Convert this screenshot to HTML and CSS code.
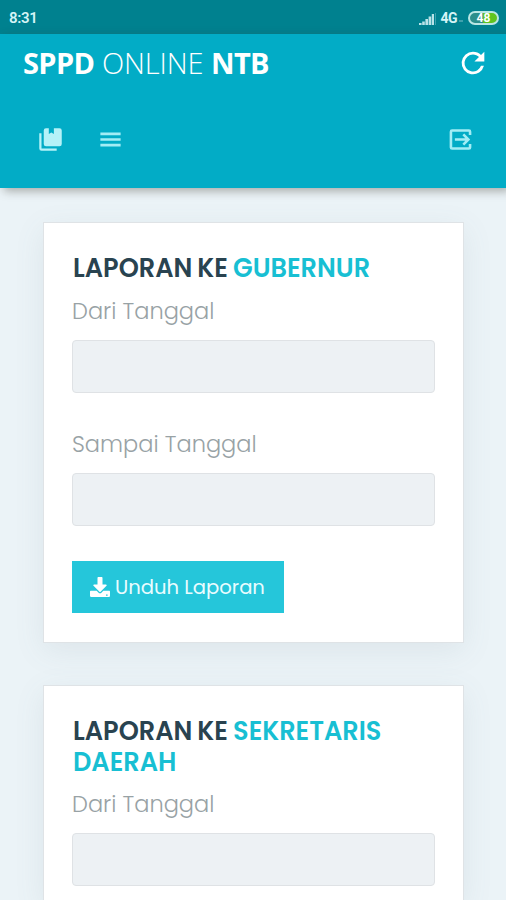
FILE: index.html
```html
<!DOCTYPE html>
<html lang="id">
<head>
  <meta charset="UTF-8" />
  <meta name="viewport" content="width=device-width, initial-scale=1.0"/>
  <title>SPPD Online NTB</title>
  <link rel="stylesheet" href="styles.css">
</head>
<body>
  <div class="status-bar">
    <span class="clock">8:31</span>
    <div class="status-right">
      <svg class="signal" width="18" height="13" viewBox="0 0 18 13">
        <path d="M0 13v-2h2.600v2zM3.200 13V9.500h2.600V13zM6.400 13V7H9v6zM9.600 13V4.500h2.600V13zM12.800 13V2h2.200v11z" fill="#b9e3e8"/>
        <path d="M16.500 1v12" stroke="#3fa1ad" stroke-width="1"/>
      </svg>
      <span class="network">4G</span>
      <span class="dots"></span>
      <div class="battery">48</div>
    </div>
  </div>

  <header class="header">
    <div class="header-top">
      <h1 class="brand"><b>SPPD</b> ONLINE <b>NTB</b></h1>
      <svg class="refresh" width="34" height="34" viewBox="0 0 24 24">
        <path fill="#fff" d="M17.650 6.350A7.950 7.950 0 0 0 12 4a8 8 0 1 0 7.730 10h-2.080A6 6 0 1 1 12 6c1.660 0 3.140.69 4.220 1.780L13 11h7V4z"/>
      </svg>
    </div>
    <nav class="nav">
      <svg width="27" height="27" viewBox="0 0 24 24">
        <path fill="#b5f2f8" d="M4 6.500H2V20a2 2 0 0 0 2 2h13.500v-2H4z"/>
        <path fill="#b5f2f8" d="M20 2h-5v5l-2.300-1.300L10.500 7V2H8a2 2 0 0 0-2 2v12a2 2 0 0 0 2 2h12a2 2 0 0 0 2-2V4a2 2 0 0 0-2-2z"/>
      </svg>
      <svg class="menu" width="27" height="27" viewBox="0 0 24 24">
        <path fill="#a3edf5" d="M3 18.200h18v-2.400H3zm0-5h18v-2.400H3zm0-7.400v2.400h18V5.800z"/>
      </svg>
      <svg class="exit" width="27" height="27" viewBox="0 0 24 24" fill="none" stroke="#a3edf5" stroke-width="2.300">
        <path d="M20.500 8V5a1 1 0 0 0-1-1H4.500a1 1 0 0 0-1 1v14a1 1 0 0 0 1 1h15a1 1 0 0 0 1-1v-3"/>
        <path d="M7 12h11.500M14.500 7.500 19 12l-4.500 4.500"/>
      </svg>
    </nav>
  </header>

  <main class="content">
    <section class="card">
      <h2 class="title"><span class="dark">LAPORAN KE</span> <span class="accent">GUBERNUR</span></h2>
      <label class="label" for="dari1">Dari Tanggal</label>
      <input class="field" id="dari1" type="text" readonly>
      <label class="label label-to" for="sampai1">Sampai Tanggal</label>
      <input class="field" id="sampai1" type="text" readonly>
      <button class="btn">
        <svg width="20" height="20" viewBox="0 0 512 512">
          <path fill="#fff" d="M216 0h80c13 0 24 11 24 24v168h88c18 0 27 21 14 34L270 378c-7 7-20 7-28 0L90 226c-13-13-4-34 14-34h88V24c0-13 11-24 24-24zm296 376v112c0 13-11 24-24 24H24c-13 0-24-11-24-24V376c0-13 11-24 24-24h147l49 49c20 20 52 20 72 0l49-49h147c13 0 24 11 24 24zm-60 88a20 20 0 1 0-40 0 20 20 0 0 0 40 0z"/>
        </svg>
        <span>Unduh Laporan</span>
      </button>
    </section>

    <section class="card card-last">
      <h2 class="title"><span class="dark">LAPORAN KE</span> <span class="accent">SEKRETARIS<br>DAERAH</span></h2>
      <label class="label" for="dari2">Dari Tanggal</label>
      <input class="field" id="dari2" type="text" readonly>
    </section>
  </main>
</body>
</html>
```
FILE: styles.css
```css
* {
  box-sizing: border-box;
}

body {
  margin: 0;
  height: 100vh;
  display: flex;
  flex-direction: column;
  overflow: hidden;
  background-color: #ebf3f7;
  font-family: Poppins, Inter, sans-serif;
}

.status-bar {
  flex: none;
  display: flex;
  justify-content: space-between;
  align-items: center;
  height: 34px;
  padding: 2px 7px 0 9px;
  background-color: #00818f;
  color: #d5f4f6;
  font-family: Roboto, sans-serif;
}

.clock {
  font-size: 15px;
  font-weight: 600;
  letter-spacing: -0.3px;
}

.status-right {
  display: flex;
  align-items: center;
}

.signal {
  margin-right: 3px;
}

.network {
  font-size: 14px;
  font-weight: 700;
  letter-spacing: -0.5px;
}

.dots {
  width: 4px;
  height: 2px;
  margin: 6px 5px 0 2px;
  background-color: #3fa1ad;
}

.battery {
  width: 31px;
  height: 14px;
  border: 2px solid #b9e6e4;
  border-radius: 7px;
  background: linear-gradient(90deg, #2c8f8c 50%, #5fc420 50%);
  color: #fff;
  font-size: 12px;
  font-weight: 700;
  line-height: 10px;
  text-align: center;
}

.header {
  flex: none;
  position: relative;
  height: 154px;
  background-color: #02acc6;
  box-shadow: 4px 3px 9px rgba(60, 60, 50, 0.4);
}

.header-top {
  display: flex;
  justify-content: space-between;
  align-items: center;
  height: 58px;
  padding: 0 16px 0 23px;
}

.brand {
  margin: 0;
  color: #fff;
  font-family: "Open Sans", sans-serif;
  font-size: 29px;
  font-weight: 300;
  line-height: 40px;
  letter-spacing: -0.1px;
  white-space: nowrap;
}

.brand b {
  font-weight: 700;
  letter-spacing: -0.6px;
}

.nav {
  display: flex;
  align-items: center;
  height: 94px;
  padding: 0 32px 0 37px;
}

.menu {
  margin-left: 33px;
}

.exit {
  margin-left: auto;
}

.content {
  flex: 1;
  min-height: 0;
  display: flex;
  flex-direction: column;
  gap: 42px;
  padding: 34px 42px 0 43px;
}

.card {
  flex: none;
  height: 421px;
  padding: 30px 28px 28px;
  background-color: #fff;
  border: 1px solid #dfe3e6;
  box-shadow: 0 8px 28px rgba(100, 120, 130, 0.1);
}

/* runs on to the bottom of the screen */
.card-last {
  flex: 1;
  height: auto;
  min-height: 0;
  padding-bottom: 0;
  border-bottom: none;
}

.title {
  margin: 0 0 12px;
  padding-left: 1px;
  font-size: 25.6px;
  font-weight: 600;
  line-height: 31px;
  word-spacing: -1px;
  white-space: nowrap;
}

.card-last .title {
  margin-bottom: 11px;
}

.dark {
  color: #294350;
}

.accent {
  color: #18bfd3;
}

.label {
  display: block;
  margin-bottom: 14px;
  color: #98a2a5;
  font-size: 22.5px;
  font-weight: 300;
  line-height: 30px;
}

.label-to {
  margin-top: 36px;
}

.field {
  display: block;
  width: 100%;
  height: 53px;
  padding: 0 16px;
  border: 1px solid #dfe2e5;
  border-radius: 4px;
  background-color: #edf1f4;
}

.btn {
  display: flex;
  align-items: center;
  gap: 5px;
  width: 212px;
  height: 52px;
  margin-top: 35px;
  padding: 0 0 0 18px;
  border: none;
  background-color: #25c6da;
  color: #e9fcff;
  font-family: inherit;
  font-size: 19.6px;
  font-weight: 400;
  white-space: nowrap;
}
```
